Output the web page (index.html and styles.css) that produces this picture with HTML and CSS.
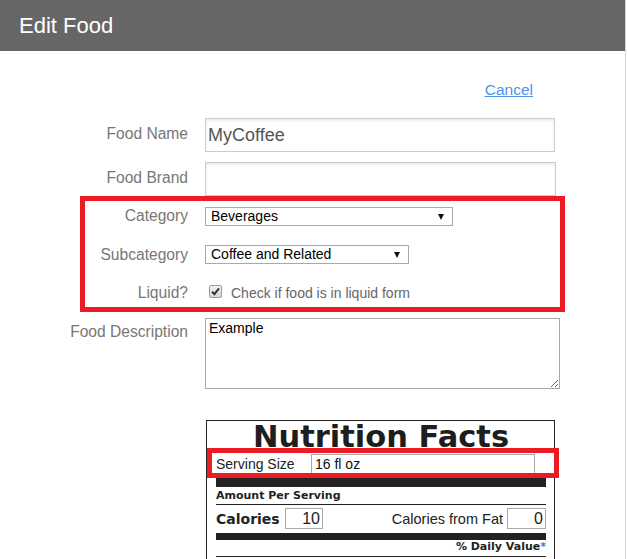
FILE: index.html
```html
<!DOCTYPE html>
<html>
<head>
<meta charset="utf-8">
<title>Edit Food</title>
<link rel="stylesheet" href="styles.css">
</head>
<body>
<div class="page">
  <header class="topbar"><h1 class="title">Edit Food</h1></header>
  <div class="cancel-row"><a class="cancel" href="#">Cancel</a></div>
  <form class="form">
    <div class="row row-name">
      <label class="lbl lbl-tall">Food Name</label>
      <input class="text big" type="text" value="MyCoffee">
    </div>
    <div class="row row-brand">
      <label class="lbl lbl-tall">Food Brand</label>
      <input class="text big" type="text" value="">
    </div>
    <div class="row row-cat">
      <label class="lbl">Category</label>
      <span class="sel sel-cat">Beverages</span>
    </div>
    <div class="row row-sub">
      <label class="lbl">Subcategory</label>
      <span class="sel sel-sub">Coffee and Related</span>
    </div>
    <div class="row row-liquid">
      <label class="lbl">Liquid?</label>
      <span class="check"><svg width="11" height="11" viewBox="0 0 11 11"><path d="M2 5.6 L4.4 8.2 L9 2.4" fill="none" stroke="#333" stroke-width="2"/></svg></span>
      <span class="check-text">Check if food is in liquid form</span>
    </div>
    <div class="row row-desc">
      <label class="lbl lbl-desc">Food Description</label>
      <textarea class="area">Example</textarea>
    </div>
  </form>
  <div class="nf">
    <div class="nf-title">Nutrition Facts</div>
    <div class="serving">
      <span class="serving-lbl">Serving Size</span>
      <span class="serving-input">16 fl oz</span>
    </div>
    <div class="bar-thick"></div>
    <div class="amount">Amount Per Serving</div>
    <div class="cal-row">
      <span class="cal-lbl">Calories</span>
      <span class="num num-cal">10</span>
      <span class="spacer"></span>
      <span class="fat-lbl">Calories from Fat</span>
      <span class="num num-fat">0</span>
    </div>
    <div class="bar-mid"></div>
    <div class="dv">% Daily Value<span class="ast">*</span></div>
  </div>
  <div class="mark mark-1"></div>
  <div class="mark mark-2"></div>
</div>
</body>
</html>
```
FILE: styles.css
```css
html, body {
  margin: 0;
  padding: 0;
  background: #fff;
  overflow: hidden;
}
.page {
  position: relative;
  width: 626px;
  height: 559px;
  box-sizing: border-box;
  border-right: 1px solid #d4d4d4;
  font-family: "Liberation Sans", Arial, sans-serif;
  overflow: hidden;
}
.topbar {
  height: 51px;
  background: #666666;
  padding-left: 19px;
}
.title {
  margin: 0;
  font-weight: normal;
  font-size: 22px;
  line-height: 51px;
  color: #fff;
}
.cancel-row {
  padding-top: 29px;
  height: 20px;
  text-align: right;
  padding-right: 92px;
}
.cancel {
  font-size: 15.5px;
  line-height: 20px;
  color: #4d94e8;
  text-decoration: underline;
}
.form {
  margin: 0;
}
.row {
  display: flex;
  align-items: flex-start;
  gap: 17px;
}
.lbl {
  width: 188px;
  flex: none;
  text-align: right;
  font-size: 15.6px;
  line-height: 20px;
  color: #777;
}
.lbl-tall { padding-top: 6px; }
.lbl-desc { padding-top: 4px; }
.row-name { margin-top: 18px; }
.row-brand { margin-top: 10px; }
.row-cat { margin-top: 11px; height: 19px; }
.row-sub { margin-top: 19px; height: 19px; }
.row-liquid { margin-top: 19px; height: 20px; gap: 0; }
.row-desc { margin-top: 15px; }
.row-cat .lbl { margin-top: -1px; }
.text {
  box-sizing: border-box;
  margin: 0;
  border: 1px solid #cccccc;
  box-shadow: inset 0 2px 3px rgba(0,0,0,0.08);
  font-family: "Liberation Sans", Arial, sans-serif;
  outline: none;
}
.big {
  width: 350px;
  height: 34px;
  padding: 0 2px;
  font-size: 18px;
  color: #555;
}
.row-brand .big { width: 351px; }
.sel {
  position: relative;
  box-sizing: border-box;
  height: 19px;
  border: 1px solid #a9a9a9;
  background: #fff;
  padding-left: 5px;
  font-size: 14px;
  line-height: 17px;
  color: #000;
}
.sel::after {
  content: "";
  position: absolute;
  top: 6px;
  right: 8px;
  border-left: 3.5px solid transparent;
  border-right: 3.5px solid transparent;
  border-top: 6px solid #111;
}
.sel-cat { width: 248px; }
.sel-sub { width: 204px; }
.check {
  box-sizing: border-box;
  width: 13px;
  height: 13px;
  margin: 2px 0 0 21px;
  border: 1px solid #9a9a9a;
  border-radius: 2px;
  background: linear-gradient(#f2f2f2, #d8d8d8);
  display: flex;
  align-items: center;
  justify-content: center;
}
.check-text {
  margin-left: 9px;
  font-size: 14px;
  line-height: 20px;
  color: #666;
}
.area {
  box-sizing: border-box;
  width: 355px;
  height: 71px;
  margin: 0;
  border: 1px solid #a9a9a9;
  padding: 1px 3px;
  font-family: "Liberation Sans", Arial, sans-serif;
  font-size: 14px;
  color: #000;
  outline: none;
}
.nf {
  margin: 31px 0 0 206px;
  width: 349px;
  height: 200px;
  box-sizing: border-box;
  border: 1px solid #222;
  padding: 0 8px 0 9px;
  color: #222;
}
.nf-title {
  font-family: "DejaVu Sans", Verdana, sans-serif;
  font-size: 30.5px;
  line-height: 32px;
  font-weight: bold;
  text-align: center;
  color: #1e1e1e;
}
.serving {
  display: flex;
  align-items: center;
  height: 20px;
  margin-top: 1px;
}
.serving-lbl {
  width: 95px;
  font-size: 14px;
  color: #222;
}
.serving-input {
  box-sizing: border-box;
  width: 224px;
  height: 20px;
  border: 1px solid #aaa;
  padding-left: 3px;
  font-size: 14px;
  line-height: 18px;
  color: #111;
}
.bar-thick {
  height: 9px;
  background: #222;
  margin-top: 4px;
}
.amount {
  font-family: "DejaVu Sans", Verdana, sans-serif;
  font-weight: bold;
  font-size: 11px;
  line-height: 16px;
  padding-top: 1px;
  border-bottom: 1px solid #222;
}
.cal-row {
  display: flex;
  align-items: center;
  height: 21px;
  margin-top: 3px;
}
.cal-lbl {
  width: 69px;
  font-family: "DejaVu Sans", Verdana, sans-serif;
  font-weight: bold;
  font-size: 14px;
}
.num {
  box-sizing: border-box;
  height: 21px;
  border: 1px solid #aaa;
  text-align: right;
  padding-right: 2px;
  font-size: 16px;
  line-height: 19px;
  color: #222;
}
.num-cal { width: 38px; }
.num-fat { width: 39px; }
.spacer { flex: 1; }
.fat-lbl {
  font-size: 14.5px;
  margin-right: 4px;
  color: #222;
}
.bar-mid {
  height: 7px;
  background: #222;
  margin-top: 4px;
}
.dv {
  text-align: right;
  font-family: "DejaVu Sans", Verdana, sans-serif;
  font-weight: bold;
  font-size: 11px;
  line-height: 14px;
  padding-bottom: 2px;
  border-bottom: 1px solid #222;
}
.ast { color: #3a7dd8; }
.mark {
  position: absolute;
  box-sizing: border-box;
  border: 5px solid #ed1c24;
}
.mark-1 {
  left: 80px;
  top: 196px;
  width: 485px;
  height: 116px;
}
.mark-2 {
  left: 207px;
  top: 448px;
  width: 352px;
  height: 30px;
}
```
